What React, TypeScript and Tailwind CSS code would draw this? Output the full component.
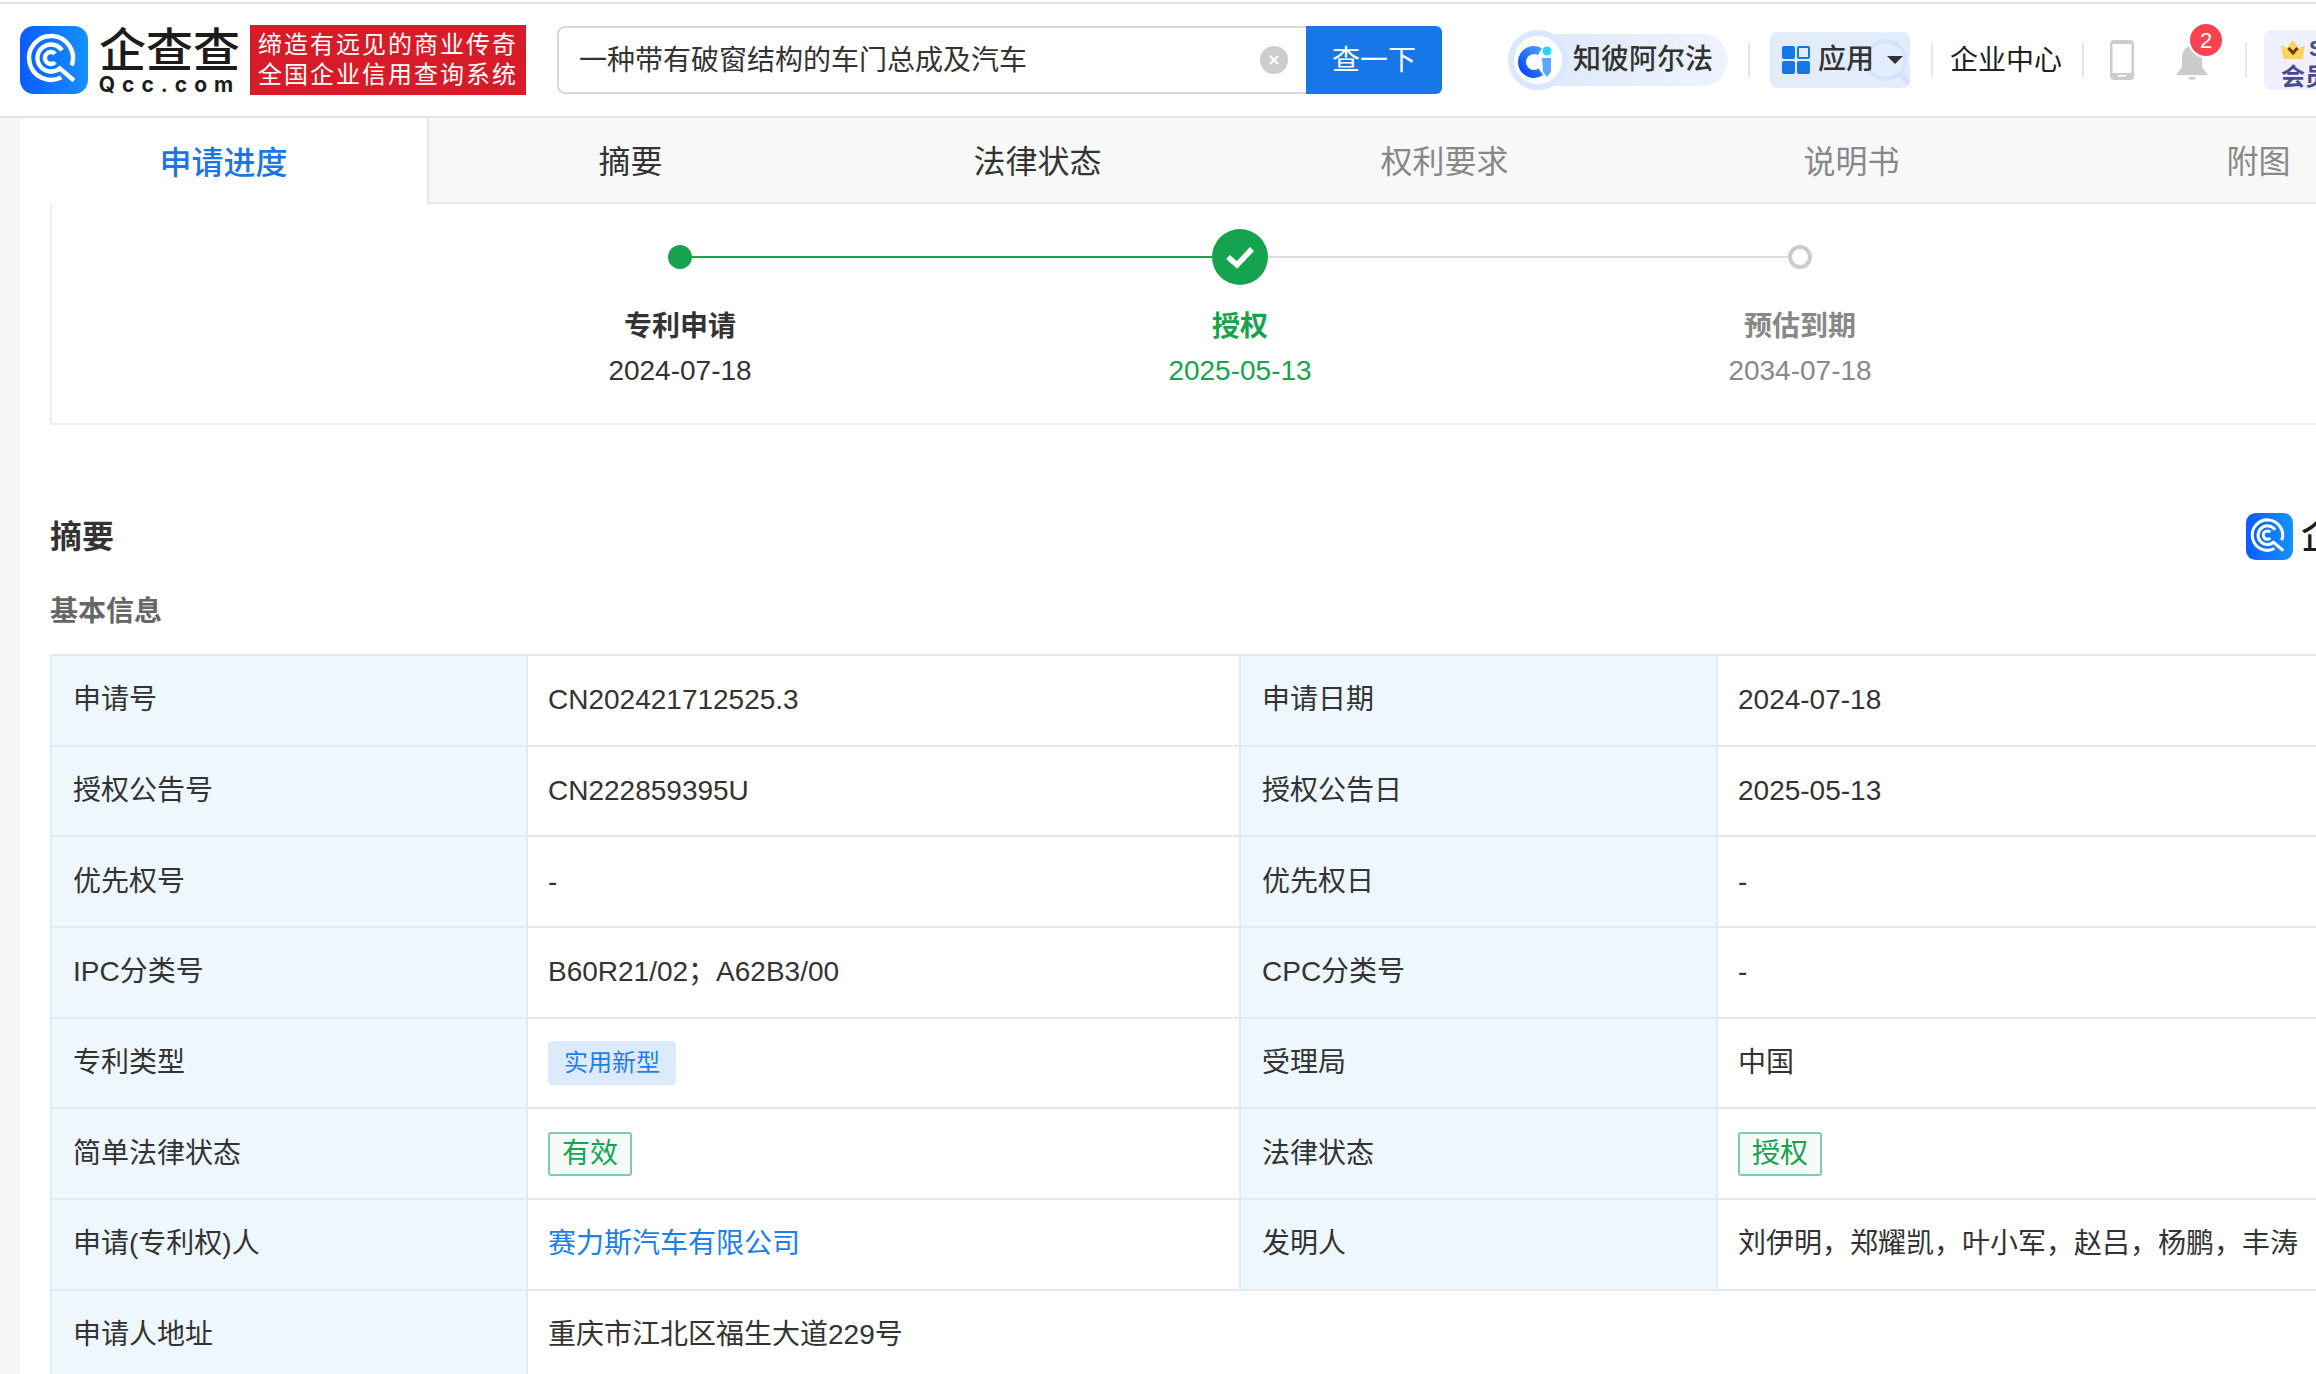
const tabs = [
  { label: '申请进度', cls: 'bg-white text-[#1a76e6] font-medium rounded-tl-[6px] border-r-2 border-[#e6e6e6] -mr-[2px]' },
  { label: '摘要', cls: 'text-[#333333] border-b-2 border-[#e8e8e8]' },
  { label: '法律状态', cls: 'text-[#333333] border-b-2 border-[#e8e8e8]' },
  { label: '权利要求', cls: 'text-[#888888] border-b-2 border-[#e8e8e8]' },
  { label: '说明书', cls: 'text-[#888888] border-b-2 border-[#e8e8e8]' },
  { label: '附图', cls: 'text-[#888888] border-b-2 border-[#e8e8e8]' },
];

const Logo = ({ size, id }: { size: number; id: string }) => (
  <svg width={size} height={size} viewBox="0 0 68 68" className="shrink-0">
    <defs>
      <linearGradient id={id} x1="0" y1="0" x2="1" y2="0">
        <stop offset="0" stopColor="#0b5cff" />
        <stop offset="1" stopColor="#1492ff" />
      </linearGradient>
    </defs>
    <rect width="68" height="68" rx="14" fill={`url(#${id})`} />
    <g fill="none" stroke="#fff" strokeWidth="4.4">
      <path d="M51.7 39.5A22 22 0 1 0 41.3 51.4" />
      <path d="M42 24.3A13.5 13.5 0 1 0 39.7 42.3L54 54.5" />
      <path d="M35.2 27.8A6 6 0 1 0 35.2 36.2" />
    </g>
  </svg>
);

const Divider = ({ cls }: { cls: string }) => <div className={`w-[2px] h-[36px] bg-[#e8e8e8] shrink-0 ${cls}`} />;

const GreenTag = ({ text }: { text: string }) => (
  <span className="inline-flex items-center justify-center w-[84px] h-[44px] border-2 border-[#7dd0a6] bg-[#f5fbf8] text-[#16a34f] rounded-[3px] align-middle">
    {text}
  </span>
);

const BlueTag = ({ text }: { text: string }) => (
  <span className="inline-flex items-center justify-center w-[128px] h-[44px] bg-[#dcebfb] text-[#1f7ee8] text-[24px] rounded-[4px] align-middle">
    {text}
  </span>
);

const Label = ({ text }: { text: string }) => (
  <td className="border-2 border-[#e0ebf6] bg-[#eef6fe] pl-[21px] text-[#333333]">{text}</td>
);

const Value = ({ children, span }: { children: React.ReactNode; span?: number }) => (
  <td colSpan={span} className="border-2 border-[#e0ebf6] pl-[20px] text-[#333333]">{children}</td>
);

const rows: [string, React.ReactNode, string, React.ReactNode][] = [
  ['申请号', 'CN202421712525.3', '申请日期', '2024-07-18'],
  ['授权公告号', 'CN222859395U', '授权公告日', '2025-05-13'],
  ['优先权号', '-', '优先权日', '-'],
  ['IPC分类号', 'B60R21/02；A62B3/00', 'CPC分类号', '-'],
  ['专利类型', <BlueTag text="实用新型" />, '受理局', '中国'],
  ['简单法律状态', <GreenTag text="有效" />, '法律状态', <GreenTag text="授权" />],
  ['申请(专利权)人', <span className="text-[#1a7fe8]">赛力斯汽车有限公司</span>, '发明人', '刘伊明，郑耀凯，叶小军，赵吕，杨鹏，丰涛'],
];

const steps = [
  { title: '专利申请', date: '2024-07-18', titleCls: 'text-[#333333]', dateCls: 'text-[#333333]' },
  { title: '授权', date: '2025-05-13', titleCls: 'text-[#16a34f]', dateCls: 'text-[#16a34f]' },
  { title: '预估到期', date: '2034-07-18', titleCls: 'text-[#888888]', dateCls: 'text-[#888888]' },
];

const Header = () => (
  <header className="relative z-[1] flex items-center h-[114px] bg-white border-b-2 border-[#e4e4e4] overflow-hidden">
    <div className="ml-[20px]">
      <Logo size={68} id="logo-top" />
    </div>

    {/* wordmark */}
    <div className="ml-[11px] w-[141px] shrink-0 flex flex-col items-center text-[#1c1c1c]">
      <span className="mt-[3px] text-[47px] leading-[47px] font-medium">企查查</span>
      <span className="text-[21px] leading-[22px] font-bold tracking-[7px] font-['Inter',sans-serif]">Qcc.com</span>
    </div>

    {/* slogan */}
    <div className="ml-[10px] w-[276px] h-[70px] shrink-0 bg-[#d61c28] text-white text-[24px] leading-[30px] tracking-[2px] flex flex-col items-center justify-center whitespace-nowrap">
      <span>缔造有远见的商业传奇</span>
      <span>全国企业信用查询系统</span>
    </div>

    {/* search */}
    <div className="ml-[31px] w-[885px] h-[68px] shrink-0 flex">
      <div className="flex-1 flex items-center border-2 border-r-0 border-[#d8d8d8] rounded-l-[8px] pl-[20px] pr-[18px]">
        <span className="flex-1 pt-[2px] text-[28px] text-[#333333]">一种带有破窗结构的车门总成及汽车</span>
        <svg width="28" height="28" viewBox="0 0 28 28">
          <circle cx="14" cy="14" r="14" fill="#cccccc" />
          <path d="M10 10l8 8M18 10l-8 8" stroke="#fff" strokeWidth="2" />
        </svg>
      </div>
      <button className="w-[136px] pt-[2px] bg-[#1776e8] text-white text-[28px] rounded-r-[6px]">查一下</button>
    </div>

    {/* alpha */}
    <div className="ml-[66px] flex items-center shrink-0">
      <div className="relative z-[1] w-[60px] h-[60px] rounded-full bg-white border-[6px] border-[#dbe7fc] flex items-center justify-center">
        <svg width="48" height="48" viewBox="0 0 48 48" className="shrink-0">
          <defs>
            <linearGradient id="alpha-c" x1="0" y1="1" x2="1" y2="0">
              <stop offset="0" stopColor="#0a47ff" />
              <stop offset="1" stopColor="#4b9df8" />
            </linearGradient>
          </defs>
          <path d="M26 15.6A12 12 0 1 0 26.9 35.8" fill="none" stroke="url(#alpha-c)" strokeWidth="8" />
          <path d="M28 22H37V36L33 41L29 36Z" fill="#5fa6f8" />
          <circle cx="33" cy="15" r="4.5" fill="#22d8f8" />
        </svg>
      </div>
      <div className="-ml-[28px] w-[188px] h-[52px] pl-[33px] rounded-r-full bg-gradient-to-r from-[#dfe9fb] to-[#eef3fd] flex items-center text-[28px] font-medium text-[#333333]">
        知彼阿尔法
      </div>
    </div>

    <Divider cls="ml-[20px]" />

    {/* apps */}
    <div className="relative ml-[20px] w-[140px] h-[56px] shrink-0 rounded-[8px] bg-[#e2ecfb] flex items-center pl-[12px] overflow-hidden">
      <svg width="64" height="64" viewBox="0 0 64 64" className="absolute left-[92px] top-[4px]">
        <circle cx="24" cy="24" r="19" fill="none" stroke="#d5e3fa" strokeWidth="4" />
        <path d="M38 38l10 10" stroke="#d5e3fa" strokeWidth="6" strokeLinecap="round" />
      </svg>
      <svg width="28" height="28" viewBox="0 0 28 28" className="relative shrink-0">
        <rect x="0" y="0" width="13" height="13" rx="2" fill="#1776e8" />
        <rect x="16" y="1" width="11" height="11" rx="1" fill="none" stroke="#1776e8" strokeWidth="2" />
        <rect x="0" y="15" width="13" height="13" rx="2" fill="#1776e8" />
        <rect x="15" y="15" width="13" height="13" rx="2" fill="#1776e8" />
      </svg>
      <span className="relative ml-[8px] text-[28px] font-medium text-[#333333]">应用</span>
      <svg width="16" height="8" viewBox="0 0 16 8" className="relative ml-[13px] shrink-0">
        <path d="M0 0H16L8 8Z" fill="#333333" />
      </svg>
    </div>

    <Divider cls="ml-[21px]" />
    <span className="ml-[17px] w-[112px] shrink-0 pt-[1px] text-[28px] text-[#222222]">企业中心</span>
    <Divider cls="ml-[20px]" />

    {/* phone */}
    <svg width="24" height="40" viewBox="0 0 24 40" className="ml-[26px] shrink-0">
      <rect width="24" height="40" rx="4" fill="#cccccc" />
      <rect x="2.5" y="4" width="19" height="29" fill="#ffffff" />
      <rect x="8" y="35" width="8" height="1.6" fill="#ffffff" />
    </svg>

    {/* bell */}
    <div className="relative ml-[42px] mt-[6px] w-[32px] h-[34px] shrink-0">
      <svg width="32" height="34" viewBox="0 0 32 34">
        <path d="M16 0C9 0 6 6 6 13V21L0 29H32L26 21V13C26 6 23 0 16 0Z" fill="#cccccc" />
        <path d="M12 31H20C19.5 34.5 12.5 34.5 12 31Z" fill="#cccccc" />
      </svg>
      <span className="absolute left-[14px] top-[-22px] w-[32px] h-[32px] rounded-full bg-[#fb4350] ring-2 ring-white text-white text-[22px] flex items-center justify-center">2</span>
    </div>

    <Divider cls="ml-[37px]" />

    {/* vip */}
    <div className="ml-[17px] w-[100px] h-[60px] shrink-0 rounded-[6px] bg-[#eef0fd] pl-[17px] pt-[6px] text-[#4a4a8f] font-bold">
      <div className="flex items-center h-[26px]">
        <svg width="24" height="19" viewBox="0 0 24 19" className="shrink-0">
          <path d="M0 5L6 8L12 0L18 8L24 5L22 17Q22 19 20 19H4Q2 19 2 17Z" fill="#fbd45e" />
          <path d="M7.5 8L12 13L16.5 8" fill="none" stroke="#6b3d00" strokeWidth="3" />
        </svg>
        <span className="ml-[4px] text-[22px] leading-none">SVIP</span>
      </div>
      <div className="mt-[1px] text-[24px] leading-[28px] whitespace-nowrap">会员</div>
    </div>
  </header>
);

const Stepper = () => (
  <div className="w-[2378px] h-[221px] border-l-2 border-b-2 border-[#eeeeee] pt-[25px]">
    <div className="mx-auto w-[1144px] h-[56px] flex items-center">
      <div className="w-[24px] h-[24px] rounded-full bg-[#16a34f] shrink-0" />
      <div className="flex-1 h-[2px] bg-[#16a34f]" />
      <svg width="56" height="56" viewBox="0 0 56 56" className="shrink-0">
        <circle cx="28" cy="28" r="28" fill="#16a34f" />
        <path d="M16 28L25 36L40 20" fill="none" stroke="#fff" strokeWidth="5.5" />
      </svg>
      <div className="flex-1 h-[2px] bg-[#dddddd]" />
      <div className="w-[24px] h-[24px] rounded-full border-4 border-[#cccccc] bg-white shrink-0" />
    </div>
    <div className="mx-auto mt-[22px] w-[1680px] grid grid-cols-3 text-center text-[28px] leading-[40px]">
      {steps.map((s) => (
        <div key={s.title}>
          <div className={`font-bold ${s.titleCls}`}>{s.title}</div>
          <div className={`mt-[4px] ${s.dateCls}`}>{s.date}</div>
        </div>
      ))}
    </div>
  </div>
);

const Watermark = () => (
  <div className="absolute left-[-800px] top-[800px] w-[2820px] origin-top-left -rotate-45 pointer-events-none z-10 grid grid-cols-[repeat(10,282px)] auto-rows-[161px]">
    {Array.from({ length: 170 }).map((_, i) => (
      <span key={i} className="pl-[23px] text-[28px] leading-[44px] font-bold tracking-[15px] text-black/[0.025] whitespace-nowrap">
        88MBP9G
      </span>
    ))}
  </div>
);

const App = () => {
  return (
    <div className="relative w-[2316px] h-[1374px] overflow-hidden bg-[#f6f6f6] font-['Liberation_Sans','Noto_Sans_CJK_SC',sans-serif]">
      <div className="h-[2px] bg-white" />
      <div className="h-[2px] bg-[#dde2e0]" />
      <Header />

      <main className="ml-[20px] w-[2442px] bg-white">
        {/* Tabs */}
        <nav className="grid grid-cols-6 h-[86px] bg-[#f8f8f8] text-[32px]">
          {tabs.map((t) => (
            <div key={t.label} className={`flex items-center justify-center pt-[3px] ${t.cls}`}>
              {t.label}
            </div>
          ))}
        </nav>

        <div className="pl-[30px] w-[2412px] h-[1170px]">
          <Stepper />

          <div className="mt-[88px] flex items-center justify-between h-[47px] w-[2382px] pr-[23px]">
            <h2 className="text-[32px] font-bold text-[#333333]">摘要</h2>
            <div className="flex items-center">
              <Logo size={47} id="logo-small" />
              <span className="ml-[8px] text-[36px] leading-none font-medium text-[#1c1c1c] whitespace-nowrap">企查查</span>
            </div>
          </div>

          <h3 className="mt-[32px] mb-[22px] text-[28px] leading-[40px] font-bold text-[#666666]">基本信息</h3>

          <table className="table-fixed border-collapse w-[2382px] text-[28px]">
            <colgroup>
              <col className="w-[476px]" />
              <col className="w-[713px]" />
              <col className="w-[477px]" />
              <col className="w-[716px]" />
            </colgroup>
            <tbody>
              {rows.map(([a, b, c, d]) => (
                <tr key={a} className="h-[90.7px]">
                  <Label text={a} />
                  <Value>{b}</Value>
                  <Label text={c} />
                  <Value>{d}</Value>
                </tr>
              ))}
              <tr className="h-[91px]">
                <Label text="申请人地址" />
                <Value span={3}>重庆市江北区福生大道229号</Value>
              </tr>
            </tbody>
          </table>
        </div>
      </main>

      <Watermark />
    </div>
  );
};

export default App;
